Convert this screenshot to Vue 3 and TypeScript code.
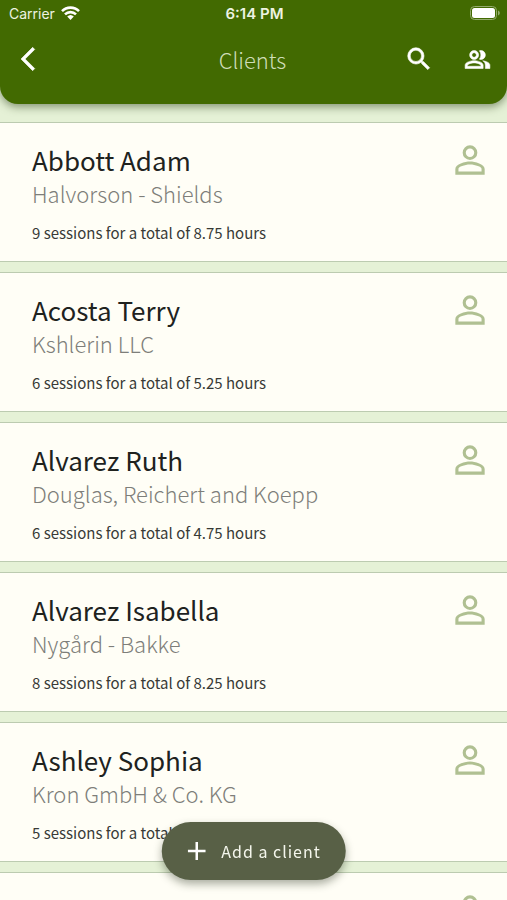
<script setup lang="ts">
interface Client {
  name: string
  company: string
  sessions: number
  hours: string
}

const clients: Client[] = [
  { name: 'Abbott Adam', company: 'Halvorson - Shields', sessions: 9, hours: '8.75' },
  { name: 'Acosta Terry', company: 'Kshlerin LLC', sessions: 6, hours: '5.25' },
  { name: 'Alvarez Ruth', company: 'Douglas, Reichert and Koepp', sessions: 6, hours: '4.75' },
  { name: 'Alvarez Isabella', company: 'Nygård - Bakke', sessions: 8, hours: '8.25' },
  { name: 'Ashley Sophia', company: 'Kron GmbH & Co. KG', sessions: 5, hours: '5.50' },
  { name: 'Auer Martin', company: 'Bauch Group', sessions: 7, hours: '6.75' },
]
</script>

<template>
  <div class="app">
    <header class="top">
      <div class="status">
        <div class="carrier">
          <span>Carrier</span>
          <svg class="wifi" viewBox="0 0 19 14" aria-hidden="true">
            <path d="M1 5.200a12 12 0 0 1 17 0M4 8.400a7.800 7.800 0 0 1 11 0" />
            <path class="solid" d="M6.200 10.600a4.800 4.800 0 0 1 6.600 0L9.500 13.900z" />
          </svg>
        </div>
        <span class="time">6:14 PM</span>
        <svg class="battery" viewBox="0 0 30 14" aria-hidden="true">
          <rect class="shell" x="0.5" y="0.5" width="26" height="13" rx="4" />
          <rect class="charge" x="2" y="2" width="23" height="10" rx="2.5" />
          <path class="cap" d="M28 4.500c1.200.4 1.800 1.400 1.800 2.500S29.200 9.100 28 9.500z" />
        </svg>
      </div>
      <nav class="bar">
        <div class="side">
          <button class="icon-btn" type="button" aria-label="Back">
            <svg class="back" viewBox="0 0 24 24"><path d="M17.770 3.770 16 2 6 12l10 10 1.770-1.770L9.540 12z" /></svg>
          </button>
        </div>
        <h1>Clients</h1>
        <div class="side end">
          <button class="icon-btn" type="button" aria-label="Search">
            <svg class="search" viewBox="0 0 24 24"><path d="M15.500 14h-.79l-.28-.27A6.471 6.471 0 0 0 16 9.500 6.500 6.500 0 1 0 9.500 16c1.610 0 3.090-.59 4.230-1.570l.27.28v.79l5 4.990L20.490 19l-4.990-5zm-6 0C7.010 14 5 11.990 5 9.500S7.010 5 9.500 5 14 7.010 14 9.500 11.990 14 9.500 14z" /></svg>
          </button>
          <button class="icon-btn" type="button" aria-label="Groups">
            <svg class="people" viewBox="0 0 24 24">
              <path d="M16.670 13.130C18.040 14.060 19 15.320 19 17v3h4v-3c0-2.180-3.570-3.470-6.330-3.870zM15 12c2.210 0 4-1.790 4-4s-1.790-4-4-4c-.47 0-.91.1-1.330.24C14.500 5.270 15 6.580 15 8s-.5 2.730-1.330 3.760c.42.14.86.24 1.330.24zM9 12c2.210 0 4-1.790 4-4s-1.790-4-4-4-4 1.790-4 4 1.790 4 4 4zm0-6c1.100 0 2 .9 2 2s-.9 2-2 2-2-.9-2-2 .9-2 2-2zM9 13c-2.670 0-8 1.340-8 4v3h16v-3c0-2.660-5.330-4-8-4zm6 5H3v-.99C3.200 16.290 6.300 15 9 15s5.800 1.290 6 2z" />
            </svg>
          </button>
        </div>
      </nav>
    </header>

    <main class="list">
      <article v-for="client in clients" :key="client.name" class="card">
        <div class="info">
          <h2>{{ client.name }}</h2>
          <p class="company">{{ client.company }}</p>
          <p class="sessions">{{ client.sessions }} sessions for a total of {{ client.hours }} hours</p>
        </div>
        <svg class="person" viewBox="0 0 24 24" aria-hidden="true">
          <path d="M12 5.700a2.300 2.300 0 1 1 0 4.600 2.300 2.300 0 0 1 0-4.600M12 4a4 4 0 1 0 0 8 4 4 0 0 0 0-8zM12 14.500c2.970 0 6.300 1.360 6.300 2.300v1.500H5.700v-1.500c0-.94 3.330-2.300 6.300-2.300M12 12.800c-2.670 0-8 1.440-8 4.100V20h16v-3.100c0-2.660-5.330-4.100-8-4.100z" />
        </svg>
      </article>
    </main>

    <button class="fab" type="button">
      <svg viewBox="0 0 18 18" aria-hidden="true"><path d="M9 0v18M0 9h18" /></svg>
      <span>Add a client</span>
    </button>
  </div>
</template>

<style>
body {
  margin: 0;
  background: #e5f1d6;
}
</style>

<style scoped>
.app {
  display: flex;
  flex-direction: column;
  height: 100vh;
  overflow: hidden;
  background: #e5f1d6;
  color: #20221e;
  font-family: "Noto Sans CJK SC", "Noto Sans", sans-serif;
}

h1,
h2,
p {
  margin: 0;
}

button {
  border: 0;
  padding: 0;
  font: inherit;
  color: inherit;
  background: none;
  cursor: pointer;
}

svg {
  display: block;
  flex: none;
}

.top {
  position: relative;
  z-index: 1;
  flex: none;
  padding-bottom: 12px;
  color: #fff;
  background: #426a01;
  border-radius: 0 0 18px 18px;
  box-shadow: 0 3px 8px rgba(40, 60, 20, 0.5);
}

.status {
  display: grid;
  grid-template-columns: 1fr auto 1fr;
  align-items: center;
  height: 26px;
  padding: 0 7px 0 9px;
  font-family: Inter, "Liberation Sans", sans-serif;
  font-size: 14px;
  color: #edf3e2;
}

.carrier {
  display: flex;
  align-items: center;
  gap: 6px;
}

.wifi {
  width: 19px;
  height: 14px;
  fill: none;
  stroke: #fff;
  stroke-width: 2.6;
}

.wifi .solid {
  fill: #fff;
  stroke: none;
}

.time {
  font-size: 15px;
  font-weight: 600;
}

.battery {
  justify-self: end;
  width: 30px;
  height: 14px;
}

.shell {
  fill: none;
  stroke: #93ab6c;
}

.charge {
  fill: #fff;
}

.cap {
  fill: #93ab6c;
}

.bar {
  display: grid;
  grid-template-columns: 1fr auto 1fr;
  align-items: center;
  height: 66px;
  padding: 0 16px 0 14px;
}

.side {
  display: flex;
  align-items: center;
}

.end {
  justify-content: flex-end;
  gap: 30px;
}

.icon-btn svg {
  fill: currentColor;
  stroke: currentColor;
  stroke-width: 0.5;
}

.back {
  width: 28px;
  height: 28px;
}

.search {
  width: 30px;
  height: 30px;
}

.people {
  width: 27px;
  height: 27px;
}

h1 {
  font-size: 22px;
  font-weight: 200;
  line-height: 32px;
  color: #cfddb8;
}

.list {
  flex: 1;
  display: flex;
  flex-direction: column;
  gap: 10px;
  min-height: 0;
  padding-top: 18px;
  overflow-y: auto;
  scrollbar-width: none;
}

.card {
  flex: none;
  display: flex;
  justify-content: space-between;
  align-items: flex-start;
  padding: 15px 15px 16px 32px;
  background: #fffef6;
  border-top: 1px solid #bccbb0;
  border-bottom: 1px solid #bccbb0;
}

.info {
  padding-top: 5px;
}

h2 {
  font-size: 26px;
  font-weight: 400;
  line-height: 34px;
}

.company {
  font-size: 22px;
  font-weight: 200;
  line-height: 32px;
  color: #7e7e7a;
}

.sessions {
  margin-top: 12px;
  font-size: 15px;
  line-height: 24px;
  color: #383a36;
}

.person {
  width: 44px;
  height: 44px;
  fill: #b0c092;
}

.fab {
  position: fixed;
  bottom: 20px;
  left: 50%;
  transform: translateX(-50%);
  display: flex;
  align-items: center;
  gap: 16px;
  height: 58px;
  padding: 0 25px 0 26px;
  border-radius: 29px;
  color: #f4f6ec;
  background: #586046;
  box-shadow: 0 4px 8px rgba(40, 50, 30, 0.4);
  font-size: 16px;
  letter-spacing: 1px;
  white-space: nowrap;
}

.fab svg {
  width: 18px;
  height: 18px;
  fill: none;
  stroke: #fff;
  stroke-width: 2.5;
}
</style>
